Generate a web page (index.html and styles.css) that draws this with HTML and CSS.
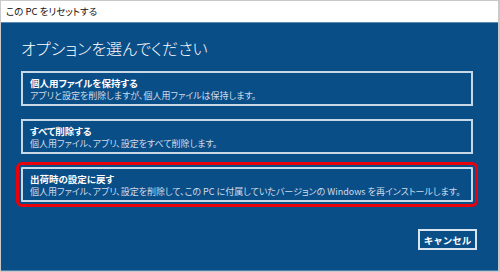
FILE: index.html
```html
<!DOCTYPE html>
<html lang="ja">
<head>
    <meta charset="UTF-8">
    <title>この PC をリセットする</title>
    <link rel="stylesheet" href="styles.css">
</head>
<body>
    <div class="window">
        <div class="titlebar">この PC をリセットする</div>
        <div class="panel">
            <h1>オプションを選んでください</h1>
            <div class="options">
                <div class="option">
                    <div class="option-title">個人用ファイルを保持する</div>
                    <div class="option-desc">アプリと設定を削除しますが、個人用ファイルは保持します。</div>
                </div>
                <div class="option">
                    <div class="option-title">すべて削除する</div>
                    <div class="option-desc">個人用ファイル、アプリ、設定をすべて削除します。</div>
                </div>
                <div class="option marked">
                    <div class="option-title">出荷時の設定に戻す</div>
                    <div class="option-desc">個人用ファイル、アプリ、設定を削除して、この PC に付属していたバージョンの Windows を再インストールします。</div>
                </div>
            </div>
            <div class="actions">
                <button class="cancel">キャンセル</button>
            </div>
        </div>
    </div>
</body>
</html>
```

FILE: styles.css
```css
body {
    margin: 0;
    background: #fff;
    font-family: "Noto Sans CJK JP", sans-serif;
    font-feature-settings: "palt";
}
.window {
    width: 500px;
    height: 272px;
    box-sizing: border-box;
    border: 1px solid #c9c9c9;
    border-right-width: 2px;
    display: flex;
    flex-direction: column;
}
.titlebar {
    height: 21px;
    line-height: 21px;
    padding-left: 5px;
    font-size: 9.5px;
    color: #111;
    background: #fff;
}
.panel {
    flex: 1;
    background: #0a4e88;
    border-top: 1px solid #5d8ab2;
    border-bottom: 1px solid #4d7ea8;
    padding: 14px 21px 0 20px;
    display: flex;
    flex-direction: column;
}
h1 {
    margin: 0 0 12px 0;
    font-size: 16px;
    font-weight: 300;
    line-height: 22px;
    color: #fff;
}
.options {
    margin-right: 4px;
    display: flex;
    flex-direction: column;
    gap: 13px;
}
.option {
    border: 2px solid #c9d8e7;
    padding: 4px 7px 2px 7px;
    color: #fff;
}
.option.marked {
    outline: 3px solid #e8000b;
    outline-offset: 2px;
    border-radius: 1px;
}
.option-title {
    font-size: 9.5px;
    font-weight: bold;
    line-height: 12px;
}
.option-desc {
    font-size: 9px;
    line-height: 13px;
    color: #d0dce8;
}
.actions {
    margin-top: 27px;
    display: flex;
    justify-content: flex-end;
}
.cancel {
    width: 59px;
    height: 21px;
    padding: 0;
    background: transparent;
    border: 2px solid #dbe5ef;
    color: #fff;
    font-family: inherit;
    font-size: 9.5px;
    font-weight: bold;
}
```
